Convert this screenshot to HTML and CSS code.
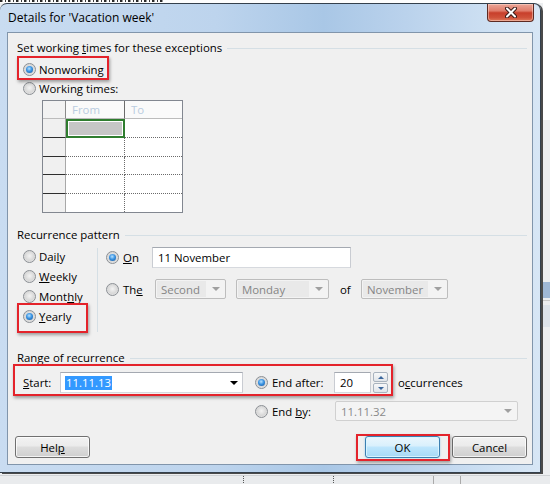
FILE: index.html
```html
<!DOCTYPE html>
<html>
<head>
<meta charset="utf-8">
<link rel="stylesheet" href="styles.css">
</head>
<body>
<div class="screen">
  <div class="bg-top"></div>
  <div class="window">
    <div class="titlebar">
      <div class="title">Details for 'Vacation week'</div>
      <div class="close">
        <svg width="12" height="11" viewBox="0 0 12 11">
          <path d="M2 1.5 L10 9.5 M10 1.5 L2 9.5" stroke="#3a1a16" stroke-width="4" stroke-linecap="round" fill="none"/>
          <path d="M2 1.5 L10 9.5 M10 1.5 L2 9.5" stroke="#ffffff" stroke-width="2" stroke-linecap="round" fill="none"/>
        </svg>
      </div>
    </div>
    <div class="client">
      <div class="group-title g1"><span>Set working <u>t</u>imes for these exceptions</span><i class="sep"></i></div>
      <div class="opt-row first"><span class="radio on"></span><span>Nonworking</span></div>
      <div class="opt-row"><span class="radio"></span><span>Working times:</span></div>
      <div class="times">
        <div class="c corner"></div><div class="c hd">From</div><div class="c hd last">To</div>
        <div class="c rh"></div><div class="c dc sel"><i></i></div><div class="c dc last"></div>
        <div class="c rh"></div><div class="c dc"></div><div class="c dc last"></div>
        <div class="c rh"></div><div class="c dc"></div><div class="c dc last"></div>
        <div class="c rh"></div><div class="c dc"></div><div class="c dc last"></div>
        <div class="c rh end"></div><div class="c dc end"></div><div class="c dc last end"></div>
      </div>

      <div class="group-title g2"><span>Recurrence pattern</span><i class="sep"></i></div>
      <div class="pattern">
        <div class="freq">
          <div class="frow"><span class="radio"></span><span>Dai<u>l</u>y</span></div>
          <div class="frow"><span class="radio"></span><span><u>W</u>eekly</span></div>
          <div class="frow"><span class="radio"></span><span>Mont<u>h</u>ly</span></div>
          <div class="frow"><span class="radio on"></span><span><u>Y</u>early</span></div>
        </div>
        <div class="vsep"></div>
        <div class="popts">
          <div class="prow1">
            <div class="opt w46"><span class="radio on"></span><span class="lbl"><u>O</u>n</span></div>
            <div class="textbox on-box">11 November</div>
          </div>
          <div class="prow2">
            <div class="opt w49"><span class="radio"></span><span class="lbl">Th<u>e</u></span></div>
            <div class="combo dis w71"><span class="val">Second</span><span class="arr"><i class="tri"></i></span></div>
            <div class="combo dis w93 ml10"><span class="val">Monday</span><span class="arr"><i class="tri"></i></span></div>
            <span class="of">of</span>
            <div class="combo dis w87"><span class="val">November</span><span class="arr"><i class="tri"></i></span></div>
          </div>
        </div>
      </div>

      <div class="group-title g3"><span>Range of recurrence</span><i class="sep"></i></div>
      <div class="rrow1">
        <span class="start-lbl"><u>S</u>tart:</span>
        <div class="combo edit w183"><span class="val"><span class="hl">11.11.13</span></span><span class="arr"><i class="tri dark"></i></span></div>
        <div class="opt w79 ml12"><span class="radio on"></span><span class="lbl">End after:</span></div>
        <div class="textbox spin-box">20</div>
        <div class="spin"><b><i class="tri-up"></i></b><b><i class="tri-dn"></i></b></div>
        <span class="occ">o<u>c</u>currences</span>
      </div>
      <div class="rrow2">
        <div class="opt w80"><span class="radio"></span><span class="lbl">End <u>b</u>y:</span></div>
        <div class="combo flat w183"><span class="val">11.11.32</span><span class="arr"><i class="tri"></i></span></div>
      </div>

      <div class="buttons">
        <div class="btn">Hel<u>p</u></div>
        <div class="btn-group">
          <div class="btn default">OK</div>
          <div class="btn">Cancel</div>
        </div>
      </div>

      <div class="mark m1"></div>
      <div class="mark m2"></div>
      <div class="mark m3"></div>
      <div class="mark m4"></div>
    </div>
  </div>
  <div class="bg-bottom"><i class="t1"></i><i class="t2"></i><i class="t3"></i><i class="t4"></i></div>
</div>
</body>
</html>
```

FILE: styles.css
```css
* { box-sizing: border-box; }
html, body { margin: 0; padding: 0; }
body {
  font-family: "Open Sans", "Noto Sans", sans-serif;
  font-size: 11.4px;
  color: #000;
}
u { text-decoration: underline; text-underline-offset: 1px; }

.screen {
  width: 550px;
  height: 484px;
  overflow: hidden;
  background:
    linear-gradient(#ffffff, #ffffff) 543px 0 / 7px 120px no-repeat,
    linear-gradient(#9fb8d6, #9fb8d6) 543px 282px / 7px 16px no-repeat,
    linear-gradient(#c8c8c8, #c8c8c8) 543px 300px / 7px 1px no-repeat,
    linear-gradient(#dde3ea, #dde3ea) 543px 305px / 7px 22px no-repeat,
    #eceef0;
}

.bg-top {
  height: 3px;
  width: 543px;
  background:
    repeating-linear-gradient(90deg, #2a2a2a 0 2px, #9a9a9a 2px 3px, #fdfdfd 3px 5px, #3a3a3a 5px 6px, #fdfdfd 6px 8px) 0 0 / 165px 2px no-repeat,
    #fdfdfd;
}

.window {
  width: 541px;
  height: 470px;
  border: 1px solid #34404c;
  border-left: none;
  border-radius: 7px 7px 0 0;
  background:
    linear-gradient(90deg, #c9dcf1 0%, #bdd4ed 40%, #a9c7e6 60%, #bad2ec 75%, #cfe1f3 92%, #d7e6f5 100%);
  box-shadow: 2px 1px 0 #4a4a4a;
  display: flex;
  flex-direction: column;
}

.titlebar {
  height: 28px;
  display: flex;
  justify-content: space-between;
  align-items: flex-start;
  padding-left: 8px;
  flex: none;
}
.title {
  padding-top: 6px;
  line-height: 15px;
  font-size: 12px;
  color: #000;
}
.close {
  width: 47px;
  height: 18px;
  margin-right: 6px;
  border: 1px solid #5d2a22;
  border-top: none;
  border-radius: 0 0 4px 4px;
  background: linear-gradient(#eba597 0%, #e07d6b 40%, #c83f2b 52%, #cf523a 80%, #e07a5c 100%);
  box-shadow: inset 0 0 0 1px rgba(255, 230, 220, 0.45);
  display: flex;
  align-items: center;
  justify-content: center;
}
.close svg { display: block; }

.client {
  position: relative;
  margin: 0 7px;
  height: 433px;
  border: 1px solid #8195ab;
  background: #f0f0f0;
  padding-top: 7px;
  flex: none;
}

.group-title {
  display: flex;
  align-items: center;
  height: 16px;
  line-height: 16px;
  padding-left: 9px;
  padding-right: 5px;
  white-space: nowrap;
}
.group-title .sep {
  flex: 1;
  height: 1px;
  background: #d5dfe5;
  margin-left: 5px;
}
.g2 { margin-top: 14px; }
.g3 { margin-top: 18px; }

.radio {
  width: 13px;
  height: 13px;
  border-radius: 50%;
  border: 1px solid #8b8f94;
  background: radial-gradient(circle at 50% 45%, #f3f3f3 0%, #d8d8d8 55%, #f2f2f2 100%);
  flex: none;
  margin-right: 3px;
  display: flex;
  align-items: center;
  justify-content: center;
}
.radio.on::after {
  content: "";
  width: 7px;
  height: 7px;
  border-radius: 50%;
  background: radial-gradient(circle at 45% 38%, #b9e2ff 0%, #3b94e2 45%, #0f4f98 100%);
}

.opt-row {
  display: flex;
  align-items: center;
  height: 19px;
  padding-left: 15px;
}
.opt-row.first { margin-top: 4px; }

/* working times grid */
.times {
  margin: 2px 0 0 34px;
  width: 141px;
  border: 1px solid #828790;
  display: grid;
  grid-template-columns: 23px 59px 57px;
  grid-template-rows: 18px 19px 19px 18px 19px 18px;
  background: #fff;
}
.c { border-right: 1px solid #c8c8c8; border-bottom: 1px solid #c8c8c8; }
.corner { background: #f2f2f2; border-right: 1px solid #8a8a8a; border-bottom: 1px solid #bcbcbc; }
.hd {
  background: #fafafa;
  border-right: 1px solid #6c6c6c;
  border-bottom: 1px solid #bcbcbc;
  color: #b9cce0;
  padding-left: 6px;
  line-height: 18px;
}
.hd.last { border-right: none; }
.rh { background: #f0f0f0; border-right: 1px solid #a8a8a8; border-bottom: 1px solid #2e2e2e; }
.dc { background: #fff; border-right: 1px dotted #6a6a6a; border-bottom: 1px dotted #6a6a6a; }
.dc.last { border-right: none; }
.c.end { border-bottom: none; }
.sel {
  border: 2px solid #2f7d2f;
  padding: 1px;
}
.sel i { display: block; height: 100%; background: #c6c6c6; }

/* recurrence pattern */
.pattern {
  margin-top: 3px;
  height: 86px;
  display: flex;
}
.freq { width: 89px; padding-left: 15px; }
.frow { display: flex; align-items: center; height: 20px; }
.vsep { width: 1px; background: #d5dfe5; margin-top: 2px; }
.popts { padding-left: 8px; padding-top: 1px; }
.prow1 { display: flex; align-items: center; height: 21px; }
.prow2 { display: flex; align-items: center; height: 20px; margin-top: 11px; }

.opt { display: flex; align-items: center; flex: none; }
.opt .lbl { margin-left: 1px; }
.w46 { width: 46px; }
.w49 { width: 49px; }
.w79 { width: 79px; }
.w80 { width: 80px; }
.w71 { width: 71px; }
.w93 { width: 93px; }
.w87 { width: 87px; }
.w183 { width: 183px; }
.ml10 { margin-left: 10px; }
.ml12 { margin-left: 12px; }

.textbox {
  height: 21px;
  border: 1px solid #abadb3;
  border-color: #a4a9b1 #c9ccd2 #d6d9de #c9ccd2;
  background: #fff;
  padding-left: 5px;
  display: flex;
  align-items: center;
  flex: none;
}
.on-box { width: 199px; }

.combo {
  height: 20px;
  border: 1px solid #bdbdbd;
  border-radius: 2px;
  display: flex;
  flex: none;
}
.combo .val {
  flex: 1;
  display: flex;
  align-items: center;
  padding-left: 5px;
  white-space: nowrap;
}
.combo .arr {
  width: 19px;
  display: flex;
  align-items: center;
  justify-content: center;
}
.combo.dis { background: #f3f3f3; color: #858585; }
.combo.dis .val { background: #e9e9e9; margin: 1px 0 1px 1px; padding-left: 4px; }
.combo.flat { background: #f4f4f4; color: #8a8a8a; border-color: #d0d0d0; }
.combo.edit {
  height: 21px;
  background: #fff;
  border-radius: 0;
  border-color: #a4a9b1 #c9ccd2 #d6d9de #c9ccd2;
}
.combo.edit .val { padding-left: 4px; }
.combo.edit .arr { width: 16px; }
.hl { background: #3399ff; color: #fff; line-height: 14px; padding: 0 1px; }

.tri {
  width: 0; height: 0;
  border-left: 4px solid transparent;
  border-right: 4px solid transparent;
  border-top: 4px solid #a0a0a0;
}
.tri.dark { border-top-color: #000; }

.of { width: 21px; margin-left: 11px; }

/* range of recurrence */
.rrow1 {
  display: flex;
  align-items: center;
  height: 21px;
  margin-top: 6px;
  padding-left: 15px;
}
.start-lbl { width: 37px; flex: none; }
.spin-box { width: 37px; }
.spin {
  width: 15px;
  height: 21px;
  margin-left: 2px;
  display: flex;
  flex-direction: column;
  gap: 1px;
  flex: none;
}
.spin b {
  flex: 1;
  border: 1px solid #a9b3be;
  border-radius: 2px;
  background: linear-gradient(#f7f8f9, #e0e4e9);
  display: flex;
  align-items: center;
  justify-content: center;
}
.tri-up, .tri-dn { width: 0; height: 0; border-left: 3px solid transparent; border-right: 3px solid transparent; }
.tri-up { border-bottom: 3px solid #3b679c; }
.tri-dn { border-top: 3px solid #3b679c; }
.occ { margin-left: 10px; }

.rrow2 {
  display: flex;
  align-items: center;
  height: 20px;
  margin-top: 8px;
  padding-left: 247px;
}

/* buttons */
.buttons {
  display: flex;
  justify-content: space-between;
  margin-top: 15px;
  padding: 0 5px 0 7px;
}
.btn-group { display: flex; gap: 12px; }
.btn {
  width: 75px;
  height: 22px;
  border: 1px solid #707070;
  border-radius: 3px;
  background: linear-gradient(#f2f2f2 0%, #ebebeb 45%, #dddddd 50%, #cfcfcf 100%);
  box-shadow: inset 0 0 0 1px rgba(255, 255, 255, 0.75);
  display: flex;
  align-items: center;
  justify-content: center;
}
.btn.default {
  border-color: #3c7fb1;
  background: linear-gradient(#eaf6fd 0%, #d9f0fc 45%, #bee6fd 50%, #a7d9f5 100%);
  box-shadow: inset 0 0 0 1px rgba(220, 245, 255, 0.9), 0 0 2px rgba(60, 160, 230, 0.5);
}

/* red annotation boxes (overlays) */
.mark {
  position: absolute;
  border: 2px solid #e4232b;
  box-shadow: 1px 2px 3px rgba(0, 0, 0, 0.35);
  pointer-events: none;
}
.m1 { left: 9px; top: 23px; width: 92px; height: 24px; }
.m2 { left: 9px; top: 270px; width: 71px; height: 30px; }
.m3 { left: 5px; top: 331px; width: 380px; height: 32px; }
.m4 { left: 348px; top: 401px; width: 94px; height: 27px; }

/* background below the window */
.bg-bottom {
  margin-top: 2px;
  width: 550px;
  height: 11px;
  display: flex;
  background: #e9ebed;
  border-top: 1px solid #cfd2d5;
}
.bg-bottom i { display: block; width: 1px; height: 9px; border-left: 1px dotted #555; }
.t1 { margin-left: 243px; }
.t2 { margin-left: 89px; }
.t3 { margin-left: 99px; border-left: 1px solid #aaa !important; }
.t4 { margin-left: 26px; border-left: 1px solid #aaa !important; }
```
